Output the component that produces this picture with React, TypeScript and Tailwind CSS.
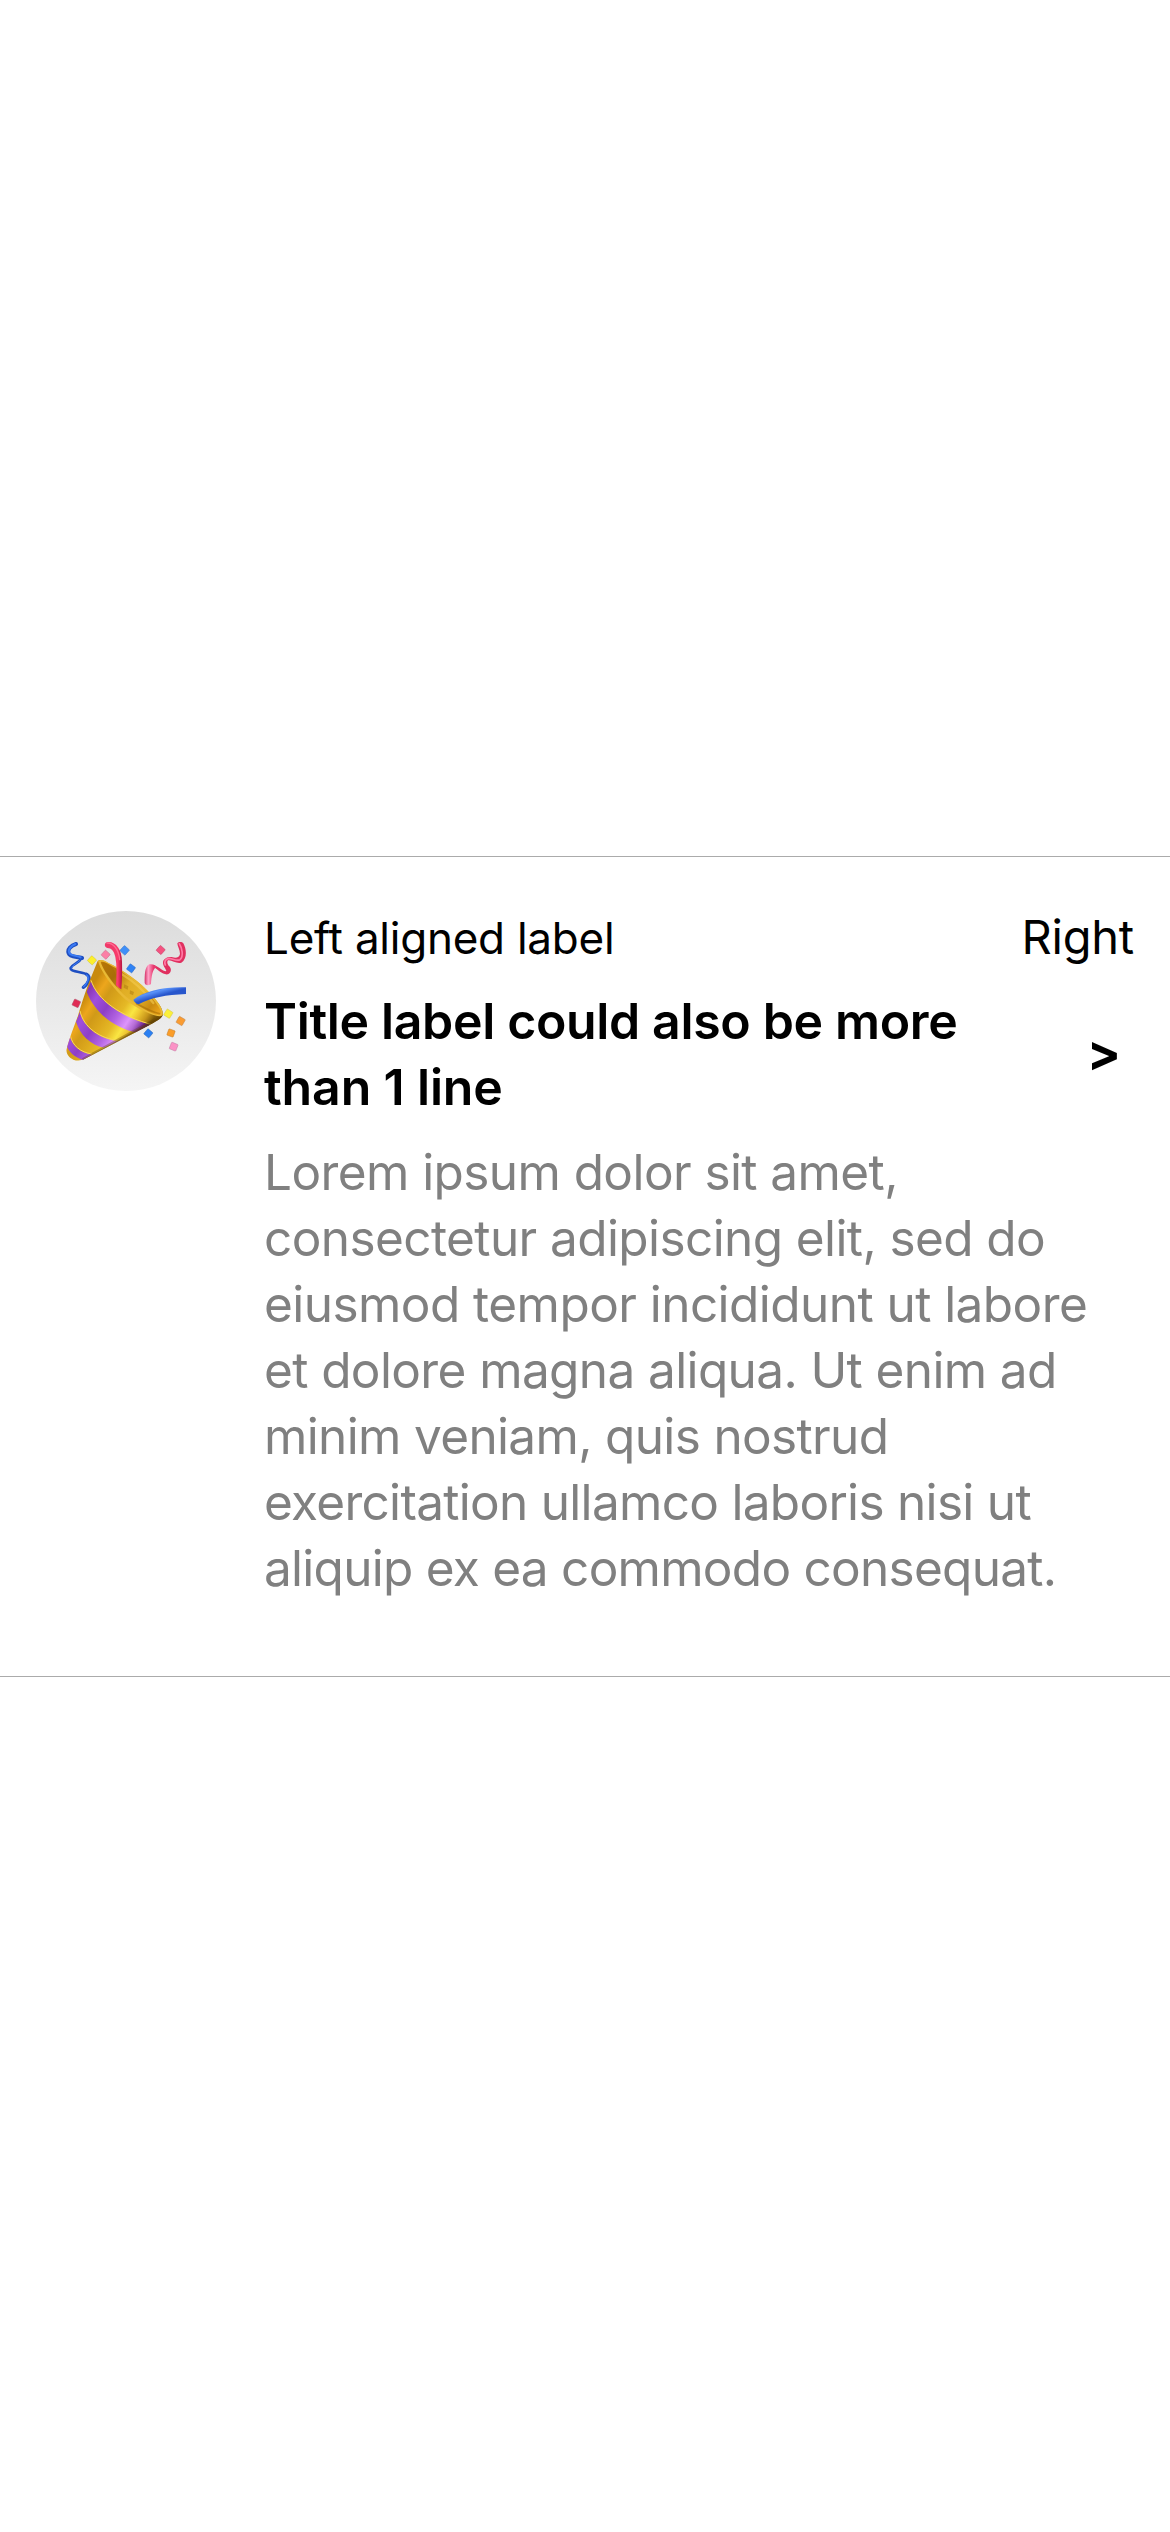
import React from "react";

const CONE =
  "M233 198 C240 192 252 196 264 204 C310 225 360 262 392 296 C416 322 431 344 428 361 C424 370 412 377 400 384 L192 493 C184 497 171 498 160 494 C146 488 137 474 140 462 C150 425 160 400 174 362 C185 325 203 270 212 250 Z";

const confetti: { x: number; y: number; s: number; r: number; fill: string; edge: string }[] = [
  { x: 216, y: 196, s: 20, r: 42, fill: "#fdf02c", edge: "#d3c52d" },
  { x: 257, y: 179, s: 20, r: 42, fill: "#fb7fa6", edge: "#c66a88" },
  { x: 314, y: 166, s: 21, r: 42, fill: "#3f8ff8", edge: "#3a76c4" },
  { x: 422, y: 165, s: 20, r: 42, fill: "#f45280", edge: "#c04469" },
  { x: 169, y: 325, s: 20, r: 25, fill: "#e02c56", edge: "#b04f68" },
  { x: 333, y: 220, s: 20, r: 36, fill: "#2f82f4", edge: "#2d6cc4" },
  { x: 445, y: 356, s: 21, r: 32, fill: "#fbf03a", edge: "#d5c746" },
  { x: 482, y: 378, s: 21, r: 30, fill: "#fa9c32", edge: "#bf8448" },
  { x: 453, y: 414, s: 20, r: 20, fill: "#fb9d28", edge: "#bf8036" },
  { x: 385, y: 415, s: 20, r: 40, fill: "#2b80f2", edge: "#2d66b4" },
  { x: 461, y: 455, s: 21, r: 22, fill: "#fb92c6", edge: "#c47aa2" },
];

function PartyPopper() {
  return (
    <svg viewBox="138 138 360 360" className="size-[120px]" fill="none" aria-label="Party popper">
      <defs>
        <linearGradient id="gold" x1="178" y1="330" x2="352" y2="444" gradientUnits="userSpaceOnUse">
          <stop offset="0" stopColor="#c88a0e" />
          <stop offset="0.14" stopColor="#eda61c" />
          <stop offset="0.26" stopColor="#d09a18" />
          <stop offset="0.4" stopColor="#dba71c" />
          <stop offset="0.56" stopColor="#e5b926" />
          <stop offset="0.7" stopColor="#fae642" />
          <stop offset="0.78" stopColor="#efc832" />
          <stop offset="0.9" stopColor="#c8961a" />
          <stop offset="1" stopColor="#7d5908" />
        </linearGradient>
        <linearGradient id="violet" x1="178" y1="330" x2="350" y2="443" gradientUnits="userSpaceOnUse">
          <stop offset="0" stopColor="#8a37b6" />
          <stop offset="0.15" stopColor="#a04fdc" />
          <stop offset="0.35" stopColor="#8e3fc6" />
          <stop offset="0.55" stopColor="#b263e2" />
          <stop offset="0.72" stopColor="#dd94fb" />
          <stop offset="0.83" stopColor="#b46bd4" />
          <stop offset="0.94" stopColor="#6c2290" />
          <stop offset="1" stopColor="#511070" />
        </linearGradient>
        <linearGradient id="inside" x1="240" y1="205" x2="420" y2="355" gradientUnits="userSpaceOnUse">
          <stop offset="0" stopColor="#c48008" />
          <stop offset="0.25" stopColor="#b0740a" />
          <stop offset="0.45" stopColor="#e0ad24" />
          <stop offset="0.65" stopColor="#e5b62c" />
          <stop offset="0.85" stopColor="#c98a10" />
          <stop offset="1" stopColor="#f0a81c" />
        </linearGradient>
        <linearGradient id="blueArm" x1="400" y1="278" x2="408" y2="306" gradientUnits="userSpaceOnUse">
          <stop offset="0" stopColor="#2a5fd6" />
          <stop offset="0.45" stopColor="#5a93fa" />
          <stop offset="1" stopColor="#2856cc" />
        </linearGradient>
        <linearGradient id="redArm" x1="280" y1="0" x2="306" y2="0" gradientUnits="userSpaceOnUse">
          <stop offset="0" stopColor="#f03a6a" />
          <stop offset="0.5" stopColor="#fb3c6c" />
          <stop offset="1" stopColor="#b91440" />
        </linearGradient>
        <linearGradient id="curlPink" x1="375" y1="0" x2="400" y2="0" gradientUnits="userSpaceOnUse">
          <stop offset="0" stopColor="#d93b70" />
          <stop offset="0.4" stopColor="#ffa3c8" />
          <stop offset="1" stopColor="#e83a70" />
        </linearGradient>
        <clipPath id="cone">
          <path d={CONE} />
        </clipPath>
      </defs>

      {/* blue curl on the left */}
      <g stroke="#1f4fc2" strokeLinecap="round" strokeLinejoin="round">
        <path d="M168 147 C154 151 141 163 146 175 C150 187 172 184 186 189" strokeWidth="12" />
        <path d="M184 190 C176 206 156 207 152 219 C150 232 190 229 203 240" strokeWidth="8" />
        <path d="M200 238 C214 247 206 266 190 277" strokeWidth="10" />
      </g>
      <g stroke="#3b7bf4" strokeLinecap="round">
        <path d="M166 147 C153 152 143 164 148 174 C153 184 172 181 182 187" strokeWidth="6" />
        <path d="M180 196 C171 206 158 208 155 219" strokeWidth="3" />
        <path d="M200 240 C210 248 203 264 191 275" strokeWidth="4" />
      </g>

      {/* pink curl on the right */}
      <path d="M472 145 C476 140 486 140 490 145 C500 162 502 192 484 203 C470 208 456 194 444 196 C440 200 442 208 448 214 C456 223 453 234 444 238 C428 241 412 222 402 217 L398 209 C412 210 426 228 438 229 C442 226 428 214 429 202 C430 190 446 184 458 187 C470 190 479 186 480 176 C480 164 472 154 472 145 Z" fill="#e0305f" />
      <path d="M478 146 C486 158 492 184 480 194 C470 199 456 190 446 190 C436 192 432 200 436 210" stroke="#ff7ba6" strokeWidth="5" strokeLinecap="round" />
      <path d="M374 264 C374 240 374 214 388 208 C396 206 405 209 410 216 C398 220 394 245 393 267 C388 272 376 272 374 264 Z" fill="url(#curlPink)" />

      {confetti.slice(0, 5).map((c) => (
        <rect key={`${c.x}-${c.y}`} x={c.x - c.s / 2} y={c.y - c.s / 2} width={c.s} height={c.s} rx="2" fill={c.fill} stroke={c.edge} strokeWidth="1.5" transform={`rotate(${c.r} ${c.x} ${c.y})`} />
      ))}

      {/* cone with its violet bands */}
      <path d={CONE} fill="url(#gold)" />
      <g clipPath="url(#cone)">
        <path d="M213 258 C232 316 300 366 400 392 L352 413 C290 402 226 358 200 290 Z" fill="url(#violet)" />
        <path d="M213 256 C232 314 300 364 400 390" stroke="#f7d75e" strokeWidth="3" />
        <path d="M180 350 C190 398 240 434 296 438 L252 458 C212 450 180 420 168 380 Z" fill="url(#violet)" />
        <path d="M180 348 C190 396 240 432 296 436" stroke="#f7d75e" strokeWidth="3" />
        <path d="M150 424 C156 454 182 474 216 479 L190 496 C164 487 146 472 138 448 Z" fill="url(#violet)" />
        <path d="M151 422 C157 452 182 472 216 477" stroke="#f7d75e" strokeWidth="3" />
        <path d="M430 364 L190 497" stroke="#5c3c02" strokeOpacity="0.35" strokeWidth="16" />
        <path d="M430 364 L190 497" stroke="#5c3c02" strokeOpacity="0.5" strokeWidth="7" />
      </g>

      {/* opening */}
      <path d="M234 198 C241 192 254 196 266 204 C310 225 360 262 392 296 C416 322 431 344 428 359 C420 370 396 358 376 350 C340 334 310 312 282 278 C262 254 240 222 234 198 Z" fill="#e9b934" />
      <path d="M242 201 C250 198 262 206 274 212 C312 230 356 266 388 300 C410 325 426 346 423 357 C412 365 392 352 376 344 C344 326 314 306 290 276 C270 252 250 224 242 201 Z" fill="url(#inside)" />
      <path d="M243 203 C252 230 272 256 290 276 C292 250 288 228 272 212 C262 206 252 199 243 203 Z" fill="#8f5a02" fillOpacity="0.25" />
      <path d="M306 238 C340 258 376 292 400 324" stroke="#f5cd52" strokeOpacity="0.6" strokeWidth="7" strokeLinecap="round" />
      <path d="M313 268 l12 6 l-2 10 l-12 -6 Z M330 286 l12 5 l-3 10 l-10 -5 Z" fill="#a9780d" fillOpacity="0.5" />
      <path d="M350 326 C376 340 400 352 418 356" stroke="#9b6504" strokeOpacity="0.5" strokeWidth="5" strokeLinecap="round" />

      {/* red streamer */}
      <path d="M262 141 C286 138 306 162 306 200 C307 230 306 255 304 283 C298 280 293 275 288 270 C290 240 291 210 286 186 C282 168 274 159 262 159 C252 157 252 143 262 141 Z" fill="url(#redArm)" />
      <path d="M261 144 C280 143 296 164 299 194" stroke="#ff6d92" strokeWidth="4" strokeLinecap="round" />

      {/* blue streamer */}
      <path d="M340 314 C374 288 430 275 500 277 L500 297 C440 299 392 308 356 328 C348 326 342 320 340 314 Z" fill="url(#blueArm)" />

      {confetti.slice(5).map((c) => (
        <rect key={`${c.x}-${c.y}`} x={c.x - c.s / 2} y={c.y - c.s / 2} width={c.s} height={c.s} rx="2" fill={c.fill} stroke={c.edge} strokeWidth="1.5" transform={`rotate(${c.r} ${c.x} ${c.y})`} />
      ))}
    </svg>
  );
}

export default function App() {
  return (
    <main className="h-[2532px] w-[1170px] overflow-hidden bg-white pt-[856px] font-['Inter',sans-serif] text-black">
      <article className="flex h-[821px] gap-12 border-y border-[#ababab] px-9 pt-[54px]">
        <div className="flex size-[180px] shrink-0 items-center justify-center rounded-full bg-linear-to-b from-[#dcdcdc] to-[#f5f5f5]">
          <PartyPopper />
        </div>
        <div className="flex min-w-0 flex-1 flex-col whitespace-nowrap">
          <div className="-mt-px flex items-baseline justify-between">
            <span className="text-[44px] leading-[54px] tracking-[-0.24px]">Left aligned label</span>
            <span className="text-[47px] leading-[54px] tracking-[-0.22px]">Right</span>
          </div>
          <div className="mt-[23px] flex items-center justify-between text-[50px] leading-[66px] font-semibold">
            <h1>
              <span className="block tracking-[-0.35px]">Title label could also be more</span>
              <span className="block tracking-[-0.15px]">than 1 line</span>
            </h1>
            <span className="mr-[13px] pb-[3px] font-bold">&gt;</span>
          </div>
          <p className="mt-[19px] text-[49.5px] leading-[66px] text-[#808080]">
            <span className="block tracking-[-0.58px]">Lorem ipsum dolor sit amet,</span>
            <span className="block tracking-[-0.59px]">consectetur adipiscing elit, sed do</span>
            <span className="block tracking-[-0.55px]">eiusmod tempor incididunt ut labore</span>
            <span className="block tracking-[-0.61px]">et dolore magna aliqua. Ut enim ad</span>
            <span className="block tracking-[-0.65px]">minim veniam, quis nostrud</span>
            <span className="block tracking-[-0.7px]">exercitation ullamco laboris nisi ut</span>
            <span className="block tracking-[-0.73px]">aliquip ex ea commodo consequat.</span>
          </p>
        </div>
      </article>
    </main>
  );
}
